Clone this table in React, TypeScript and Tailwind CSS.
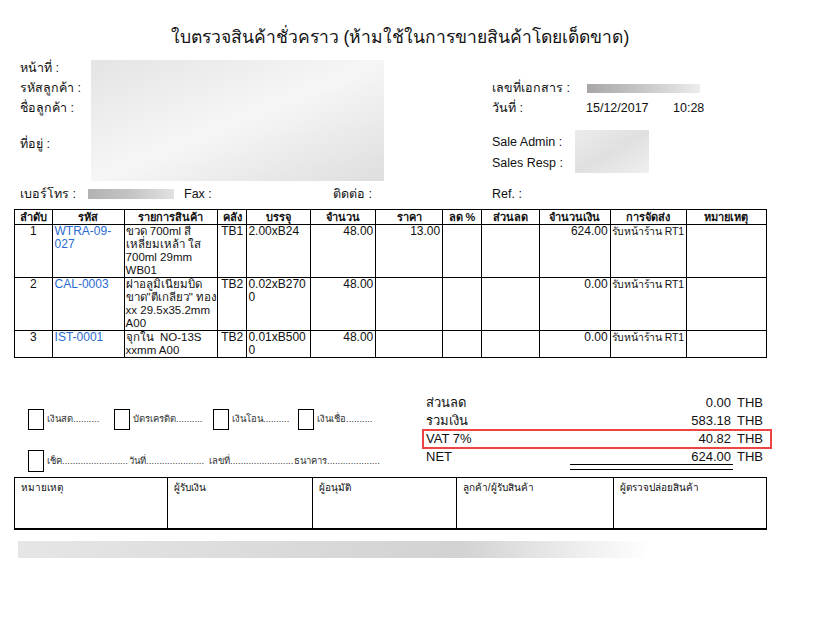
import type { ReactNode } from 'react'

const font = "font-['Liberation_Sans','Noto_Sans',sans-serif]"

const columns = [
  { label: 'ลำดับ', width: 'w-[37px]' },
  { label: 'รหัส', width: 'w-[71px]' },
  { label: 'รายการสินค้า', width: 'w-[92px]' },
  { label: 'คลัง', width: 'w-[29px]' },
  { label: 'บรรจุ', width: 'w-[63px]' },
  { label: 'จำนวน', width: 'w-[64px]' },
  { label: 'ราคา', width: 'w-[66px]' },
  { label: 'ลด %', width: 'w-[38px]' },
  { label: 'ส่วนลด', width: 'w-[57px]' },
  { label: 'จำนวนเงิน', width: 'w-[70px]' },
  { label: 'การจัดส่ง', width: 'w-[75px]' },
  { label: 'หมายเหตุ', width: 'w-[79px]' },
]

type Item = {
  no: string
  code: string[]
  name: string[]
  store: string
  pack: string[]
  qty: string
  price: string
  amount: string
  height: string
}

const items: Item[] = [
  {
    no: '1',
    code: ['WTRA-09-', '027'],
    name: ['ขวด 700ml สี่', 'เหลี่ยมเหล้า ใส', '700ml 29mm', 'WB01'],
    store: 'TB1',
    pack: ['2.00xB24'],
    qty: '48.00',
    price: '13.00',
    amount: '624.00',
    height: 'h-[53px]',
  },
  {
    no: '2',
    code: ['CAL-0003'],
    name: ['ฝาอลูมิเนียมบิด', 'ขาด"ตีเกลียว" ทอง', 'xx 29.5x35.2mm', 'A00'],
    store: 'TB2',
    pack: ['0.02xB270', '0'],
    qty: '48.00',
    price: '',
    amount: '0.00',
    height: 'h-[51px]',
  },
  {
    no: '3',
    code: ['IST-0001'],
    name: ['จุกใน  NO-13S', 'xxmm A00'],
    store: 'TB2',
    pack: ['0.01xB500', '0'],
    qty: '48.00',
    price: '',
    amount: '0.00',
    height: 'h-[25px]',
  },
]

const totals = [
  { label: 'ส่วนลด', value: '0.00' },
  { label: 'รวมเงิน', value: '583.18' },
  { label: 'VAT 7%', value: '40.82', boxed: true },
  { label: 'NET', value: '624.00' },
]

const signers = [
  { label: 'หมายเหตุ', width: 'w-[152px]' },
  { label: 'ผู้รับเงิน', width: 'w-[146px]' },
  { label: 'ผู้อนุมัติ', width: 'w-[144px]' },
  { label: 'ลูกค้า/ผู้รับสินค้า', width: 'w-[158px]' },
  { label: 'ผู้ตรวจปล่อยสินค้า', width: 'w-[153px]' },
]

const chequeFields = [
  { text: 'เช็ค.........................', width: 'w-[82px]' },
  { text: 'วันที่......................', width: 'w-[80px]' },
  { text: 'เลขที่........................', width: 'w-[85px]' },
  { text: 'ธนาคาร....................', width: 'w-[90px]' },
]

function Lines({ lines }: { lines: string[] }) {
  return (
    <>
      {lines.map((line, i) => (
        <div key={i} className="whitespace-pre">
          {line}
        </div>
      ))}
    </>
  )
}

function Cell({ children, className = '' }: { children?: ReactNode; className?: string }) {
  return <td className={`overflow-hidden border border-black p-0 align-top leading-[13px] ${className}`}>{children}</td>
}

function CheckBox() {
  return <span className="inline-block h-[21px] w-[16px] shrink-0 border border-black" />
}

export default function App() {
  return (
    <div className={`h-[619px] w-[837px] overflow-hidden bg-white text-[#111] ${font}`}>
      <h1 className="w-[800px] pt-[24px] text-center text-[17.5px] leading-[26px]">
        ใบตรวจสินค้าชั่วคราว (ห้ามใช้ในการขายสินค้าโดยเด็ดขาด)
      </h1>

      <div className="mt-[8px] flex text-[12.5px] leading-[20px]">
        <div className="flex w-[492px] pl-[20px]">
          <div className="w-[71px]">
            <div>หน้าที่ :</div>
            <div>รหัสลูกค้า :</div>
            <div>ชื่อลูกค้า :</div>
            <div className="mt-[16px]">ที่อยู่ :</div>
          </div>
          <div className="mt-[2px] h-[121px] w-[293px] bg-gradient-to-br from-[#e4e4e4] via-[#f6f6f6] to-[#dedede]" />
        </div>
        <div>
          <div className="h-[20px]" />
          <div className="flex items-center">
            <span className="w-[95px]">เลขที่เอกสาร :</span>
            <span className="h-[9px] w-[113px] bg-gradient-to-r from-[#aaa6a8] via-[#c8c8c8] to-[#ececec]" />
          </div>
          <div className="flex">
            <span className="w-[94px]">วันที่ :</span>
            <span className="w-[87px]">15/12/2017</span>
            <span>10:28</span>
          </div>
          <div className="mt-[14px] flex">
            <div className="w-[83px]">
              <div>Sale Admin :</div>
              <div className="mt-[1px]">Sales Resp :</div>
            </div>
            <div className="-mt-[2px] h-[43px] w-[74px] bg-gradient-to-br from-[#ececec] via-[#e0e0e0] to-[#efefef]" />
          </div>
        </div>
      </div>

      <div className="mt-[3px] flex h-[20px] items-center text-[12.5px]">
        <span className="w-[88px] pl-[20px]">เบอร์โทร :</span>
        <span className="h-[10px] w-[86px] bg-gradient-to-r from-[#b2b2b2] via-[#c4c4c4] to-[#e2e2e2]" />
        <span className="ml-[10px] w-[149px]">Fax :</span>
        <span className="w-[159px]">ติดต่อ :</span>
        <span>Ref. :</span>
      </div>

      <table className="mt-[5px] ml-[14px] w-[753px] table-fixed border-collapse text-[12px]">
        <thead>
          <tr className="h-[15px]">
            {columns.map((c) => (
              <th
                key={c.label}
                className={`${c.width} border border-black p-0 text-center align-middle text-[11px] font-bold leading-[13px]`}
              >
                {c.label}
              </th>
            ))}
          </tr>
        </thead>
        <tbody>
          {items.map((it) => (
            <tr key={it.no} className={it.height}>
              <Cell className="text-center">{it.no}</Cell>
              <Cell className="pl-[2px] text-[#2a6bd0]">
                <Lines lines={it.code} />
              </Cell>
              <Cell className="pl-[1px] text-[11.5px]">
                <Lines lines={it.name} />
              </Cell>
              <Cell className="text-center">{it.store}</Cell>
              <Cell className="pl-[1px]">
                <Lines lines={it.pack} />
              </Cell>
              <Cell className="pr-[2px] text-right">{it.qty}</Cell>
              <Cell className="pr-[2px] text-right">{it.price}</Cell>
              <Cell />
              <Cell />
              <Cell className="pr-[2px] text-right">{it.amount}</Cell>
              <Cell className="whitespace-nowrap pl-[1px] text-[10.5px] tracking-[-0.2px]">รับหน้าร้าน RT1</Cell>
              <Cell />
            </tr>
          ))}
        </tbody>
      </table>

      <div className="mt-[39px] flex h-[80px]">
        <div className="w-[422px] pl-[28px] pt-[12px] text-[9.5px] text-[#333]">
          <div className="flex items-center">
            <CheckBox />
            <span className="ml-[3px] w-[67px]">เงินสด..........</span>
            <CheckBox />
            <span className="ml-[3px] w-[80px]">บัตรเครดิต..........</span>
            <CheckBox />
            <span className="ml-[3px] w-[66px]">เงินโอน..........</span>
            <CheckBox />
            <span className="ml-[3px]">เงินเชื่อ..........</span>
          </div>
          <div className="mt-[20px] flex items-center">
            <span className="inline-block h-[22px] w-[16px] shrink-0 border border-black" />
            <div className="ml-[3px] flex">
              {chequeFields.map((f) => (
                <span key={f.text} className={`${f.width} shrink-0 whitespace-nowrap`}>
                  {f.text}
                </span>
              ))}
            </div>
          </div>
        </div>

        <div className="-mt-[3px] text-[13px] leading-[18px]">
          {totals.map((t) =>
            t.boxed ? (
              <div key={t.label} className="-my-[1px] flex w-[350px] border-2 border-[#ee4444] pl-[2px] leading-[16px]">
                <span className="w-[100px]">{t.label}</span>
                <span className="w-[205px] text-right">{t.value}</span>
                <span className="ml-[6px]">THB</span>
              </div>
            ) : (
              <div key={t.label} className="flex w-[350px] pl-[4px]">
                <span className="w-[100px]">{t.label}</span>
                <span className="w-[205px] text-right">{t.value}</span>
                <span className="ml-[6px]">THB</span>
              </div>
            ),
          )}
          <div className="-mt-[2px] ml-[148px] h-[6px] w-[163px] border-y border-black" />
        </div>
      </div>

      <div className="ml-[14px] flex h-[53px] w-[753px] border border-b-2 border-black text-[10px]">
        {signers.map((s, i) => (
          <div key={s.label} className={`${s.width} ${i > 0 ? 'border-l border-black' : ''} pl-[6px] pt-[2px]`}>
            {s.label}
          </div>
        ))}
      </div>

      <div className="ml-[18px] mt-[11px] h-[17px] w-[632px] bg-gradient-to-r from-[#e6e6e6] via-[#d2d2d2] via-70% to-[#ffffff]" />
    </div>
  )
}
